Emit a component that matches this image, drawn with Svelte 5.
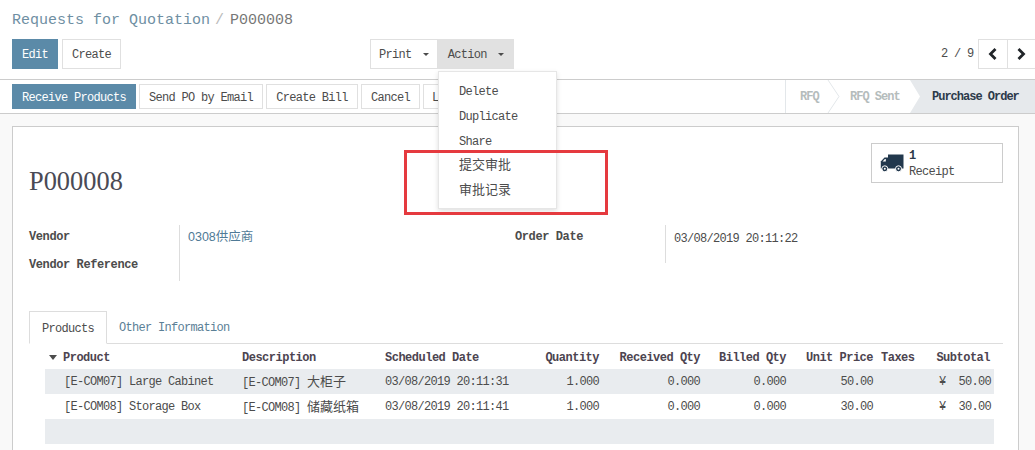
<script>
  const rows = [
    { product: '[E-COM07] Large Cabinet', code: '[E-COM07]', cn: '大柜子', date: '03/08/2019 20:11:31', price: '50.00' },
    { product: '[E-COM08] Storage Box', code: '[E-COM08]', cn: '储藏纸箱', date: '03/08/2019 20:11:41', price: '30.00' }
  ]
  const actions = ['Delete', 'Duplicate', 'Share']
  const customActions = ['提交审批', '审批记录']
</script>

<div class="page">
  <header class="panel">
    <div class="crumbs"><span class="link">Requests for Quotation</span><span class="sep">/</span>P000008</div>
    <div class="toolbar">
      <div class="group">
        <button class="btn primary edit">Edit</button>
        <button class="btn create">Create</button>
      </div>
      <div class="sidebar">
        <button class="btn print">Print <i class="caret"></i></button>
        <div class="action-wrap">
          <button class="btn action">Action <i class="caret"></i></button>
          <ul class="menu">
            {#each actions as a}
              <li>{a}</li>
            {/each}
            {#each customActions as a}
              <li class="cn">{a}</li>
            {/each}
          </ul>
        </div>
      </div>
      <div class="pager">
        <span class="count">2 / 9</span>
        <button class="btn arrow" aria-label="Previous">
          <svg width="12" height="14" viewBox="0 0 12 14"><path d="M8.5 2 L3.5 7 L8.5 12" fill="none" stroke="#212529" stroke-width="2.8"/></svg>
        </button>
        <button class="btn arrow" aria-label="Next">
          <svg width="12" height="14" viewBox="0 0 12 14"><path d="M3.5 2 L8.5 7 L3.5 12" fill="none" stroke="#212529" stroke-width="2.8"/></svg>
        </button>
      </div>
    </div>
  </header>

  <div class="statusrow">
    <div class="group tight">
      <button class="btn primary receive">Receive Products</button>
      <button class="btn send">Send PO by Email</button>
      <button class="btn bill">Create Bill</button>
      <button class="btn cancel">Cancel</button>
      <button class="btn lock">Lock</button>
    </div>
    <div class="stages">
      <span class="stage s1">RFQ</span>
      <span class="stage s2">RFQ Sent</span>
      <span class="stage current">Purchase Order</span>
      <svg class="chevron" width="14" height="33" viewBox="0 0 14 33"><path d="M1 0 L12 16.5 L1 33" fill="none" stroke="#e3e7ea"/></svg>
    </div>
  </div>

  <main class="sheet">
    <div class="smart">
      <svg class="truck" width="24" height="20" viewBox="0 0 24 20">
        <path d="M8 1.5 H23.5 V15.5 H8 Z" fill="#22384d"/>
        <path d="M8 4.5 H4.5 L0.8 8.5 V15.5 H8 Z" fill="#22384d"/>
        <path d="M5.8 6 H4.9 L2.6 8.5 H5.8 Z" fill="#fff"/>
        <circle cx="4.8" cy="15.8" r="3" fill="#22384d" stroke="#fff" stroke-width="1"/>
        <circle cx="4.8" cy="15.8" r="1" fill="#fff"/>
        <circle cx="18.5" cy="15.8" r="3" fill="#22384d" stroke="#fff" stroke-width="1"/>
        <circle cx="18.5" cy="15.8" r="1" fill="#fff"/>
      </svg>
      <div class="smart-text"><b>1</b><span>Receipt</span></div>
    </div>

    <h1>P000008</h1>

    <div class="form">
      <div class="col">
        <div class="labels">
          <span class="lab">Vendor</span>
          <span class="lab">Vendor Reference</span>
        </div>
        <div class="values tall"><span class="vendor">0308供应商</span></div>
      </div>
      <div class="col">
        <div class="labels"><span class="lab">Order Date</span></div>
        <div class="values short"><span>03/08/2019 20:11:22</span></div>
      </div>
    </div>

    <div class="tabs">
      <span class="tab active">Products</span>
      <span class="tab link">Other Information</span>
    </div>

    <table>
      <colgroup>
        <col style="width:193px" /><col style="width:143px" /><col style="width:159px" /><col style="width:64px" />
        <col style="width:101px" /><col style="width:86px" /><col style="width:86px" /><col style="width:54px" /><col style="width:63px" />
      </colgroup>
      <thead>
        <tr>
          <th><i class="sort"></i>Product</th>
          <th>Description</th>
          <th>Scheduled Date</th>
          <th class="num">Quantity</th>
          <th class="num">Received Qty</th>
          <th class="num">Billed Qty</th>
          <th class="num price">Unit Price</th>
          <th>Taxes</th>
          <th class="num total">Subtotal</th>
        </tr>
      </thead>
      <tbody>
        {#each rows as r}
          <tr>
            <td class="first">{r.product}</td>
            <td>{r.code} <span class="cn">{r.cn}</span></td>
            <td>{r.date}</td>
            <td class="num">1.000</td>
            <td class="num">0.000</td>
            <td class="num">0.000</td>
            <td class="num price">{r.price}</td>
            <td></td>
            <td class="num total"><span class="cur">¥</span>{r.price}</td>
          </tr>
        {/each}
        <tr class="empty"><td colspan="9"></td></tr>
      </tbody>
    </table>
  </main>

  <div class="annotation"></div>
</div>

<style>
  :global(body) {
    margin: 0;
  }

  .page {
    position: relative;
    width: 1035px;
    height: 450px;
    overflow: hidden;
    background: #f9f9f9;
    color: #4c4c4c;
    font-family: "Liberation Mono", "Noto Sans CJK SC", monospace;
    font-size: 12px;
    letter-spacing: -0.7px;
  }

  .link {
    color: #5b8096;
  }

  .cn {
    font-family: "Noto Sans CJK SC", sans-serif;
    font-size: 13px;
    letter-spacing: 0;
    line-height: 14px;
  }

  button {
    font: inherit;
    letter-spacing: inherit;
    color: #4c4c4c;
    cursor: pointer;
  }

  .panel {
    background: #fff;
    height: 80px;
    box-sizing: border-box;
    padding: 11px 0 0 12px;
    border-bottom: 1px solid #ccc;
  }

  .crumbs {
    font-size: 15px;
    letter-spacing: 0;
    line-height: 19px;
    color: #777;
  }

  .crumbs .link {
    color: #6f8fa3;
  }

  .sep {
    margin: 0 6px 0 5px;
    color: #bbb;
  }

  .toolbar {
    display: flex;
    margin-top: 9px;
    height: 30px;
  }

  .group {
    display: flex;
    gap: 4px;
    width: 358px;
  }

  .group.tight {
    gap: 3px;
    width: auto;
  }

  .btn {
    box-sizing: border-box;
    height: 100%;
    padding: 2px 0 0;
    background: #fff;
    border: 1px solid #e0e0e0;
    border-radius: 0;
  }

  .btn.primary {
    background: #5b8aa8;
    border-color: #5b8aa8;
    color: #fff;
  }

  .edit { width: 46px; }
  .create { width: 59px; }
  .print { width: 68px; }
  .action {
    width: 76px;
    background: #e1e1e1;
    border-color: #e1e1e1;
  }

  .sidebar {
    display: flex;
    width: 571px;
  }

  .action-wrap {
    position: relative;
    height: 100%;
  }

  .caret {
    display: inline-block;
    width: 0;
    height: 0;
    margin: 0 0 2px 5px;
    border-top: 3px solid #4c4c4c;
    border-left: 3px solid transparent;
    border-right: 3px solid transparent;
  }

  .menu {
    position: absolute;
    left: 0;
    top: 32px;
    z-index: 5;
    box-sizing: border-box;
    width: 119px;
    height: 138px;
    margin: 0;
    padding: 8px 0 0 20px;
    list-style: none;
    background: #fff;
    border: 1px solid #e6e6e6;
    box-shadow: 0 2px 5px rgba(0, 0, 0, 0.13);
  }

  .menu li {
    height: 25px;
    line-height: 25px;
  }

  .menu li.cn {
    line-height: 17px;
  }

  .pager {
    display: flex;
    align-items: center;
    flex: 1;
  }

  .count {
    width: 37px;
  }

  .arrow {
    width: 28.5px;
    padding: 0;
    display: flex;
    align-items: center;
    justify-content: center;
    border-right: none;
  }

  .statusrow {
    display: flex;
    justify-content: space-between;
    box-sizing: border-box;
    height: 34px;
    padding: 4px 0 4px 12px;
    background: #fff;
    border-bottom: 1px solid #ccc;
  }

  .receive { width: 124px; }
  .send { width: 124px; }
  .bill { width: 92px; }
  .cancel { width: 59px; }
  .lock { width: 60px; text-align: left; padding-left: 8px; }

  .stages {
    position: relative;
    display: flex;
    width: 250px;
    margin: -4px 0;
    border-left: 1px solid #e3e7ea;
    box-sizing: border-box;
    font-weight: bold;
    letter-spacing: -1px;
  }

  .stage {
    display: flex;
    align-items: center;
    box-sizing: border-box;
    height: 33px;
    color: #b5bcbc;
  }

  .s1 {
    width: 44px;
    padding-left: 14px;
  }

  .s2 {
    width: 80px;
    padding-left: 20px;
  }

  .current {
    width: 125px;
    padding-left: 22px;
    color: #2c3a4a;
    background: #e6e9ec;
    clip-path: polygon(0 0, 100% 0, 100% 100%, 0 100%, 10px 50%);
  }

  .chevron {
    position: absolute;
    left: 41px;
    top: 0;
  }

  .sheet {
    position: relative;
    box-sizing: border-box;
    width: 1007px;
    height: 340px;
    margin: 12px 0 0 12px;
    padding: 16px 15px 0 16px;
    background: #fff;
    border: 1px solid #ccc;
    border-bottom: none;
  }

  .smart {
    float: right;
    box-sizing: border-box;
    width: 132px;
    height: 40px;
    display: flex;
    align-items: center;
    gap: 5px;
    padding-left: 8px;
    border: 1px solid #ccc;
  }

  .smart-text {
    display: flex;
    flex-direction: column;
    padding-top: 2px;
    line-height: 15px;
  }

  .smart-text b {
    color: #2c3a4a;
  }

  .smart-text span {
    margin-top: 1px;
  }

  h1 {
    margin: 0;
    padding-top: 20px;
    font-family: "Liberation Serif", serif;
    font-size: 26.4px;
    font-weight: normal;
    letter-spacing: 0;
    line-height: 36px;
    color: #4a4a55;
  }

  .form {
    display: flex;
    margin-top: 26px;
  }

  .col {
    display: flex;
    width: 486px;
  }

  .labels {
    display: flex;
    flex-direction: column;
    width: 150px;
    font-weight: bold;
    letter-spacing: -0.4px;
  }

  .lab {
    height: 28px;
    line-height: 24px;
  }

  .values {
    box-sizing: border-box;
    padding-left: 8px;
    border-left: 1px solid #ddd;
  }

  .tall {
    height: 56px;
    padding-top: 1px;
  }

  .short {
    height: 38px;
    padding-top: 7px;
  }

  .vendor {
    font-family: "Liberation Sans", "Noto Sans CJK SC", sans-serif;
    font-size: 12.5px;
    letter-spacing: 0;
    color: #4f7a96;
  }

  .tabs {
    display: flex;
    margin-top: 30px;
    height: 32px;
    border-bottom: 1px solid #ddd;
  }

  .tab {
    box-sizing: border-box;
    height: 33px;
    line-height: 34px;
    padding: 0 12px;
  }

  .tab.active {
    width: 78px;
    background: #fff;
    border: 1px solid #ddd;
    border-bottom: 1px solid #fff;
  }

  table {
    table-layout: fixed;
    width: 949px;
    margin: 0 0 0 16px;
    border-collapse: collapse;
  }

  th,
  td {
    height: 25px;
    padding: 0 0 0 4px;
    line-height: 14px;
    text-align: left;
    white-space: nowrap;
    box-sizing: border-box;
  }

  th {
    padding-top: 2px;
    font-weight: bold;
    letter-spacing: -0.5px;
    color: #4c4450;
  }

  td.first {
    padding-left: 19px;
  }

  th.num,
  td.num {
    text-align: right;
    padding-right: 5px;
    padding-left: 0;
  }

  th.price,
  td.price {
    padding-right: 4px;
  }

  th.total {
    padding-right: 4px;
  }

  td.total {
    padding-right: 3px;
  }

  .cur {
    margin-right: 13px;
  }

  .sort {
    display: inline-block;
    width: 0;
    height: 0;
    margin: 0 6px 1px 0;
    border-top: 5px solid #4c4c4c;
    border-left: 4px solid transparent;
    border-right: 4px solid transparent;
  }

  tbody tr:nth-child(odd) td {
    background: #e9ecef;
  }

  .annotation {
    position: absolute;
    left: 404px;
    top: 150px;
    z-index: 6;
    box-sizing: border-box;
    width: 204px;
    height: 65px;
    border: 3px solid #e53a3f;
    pointer-events: none;
  }
</style>
